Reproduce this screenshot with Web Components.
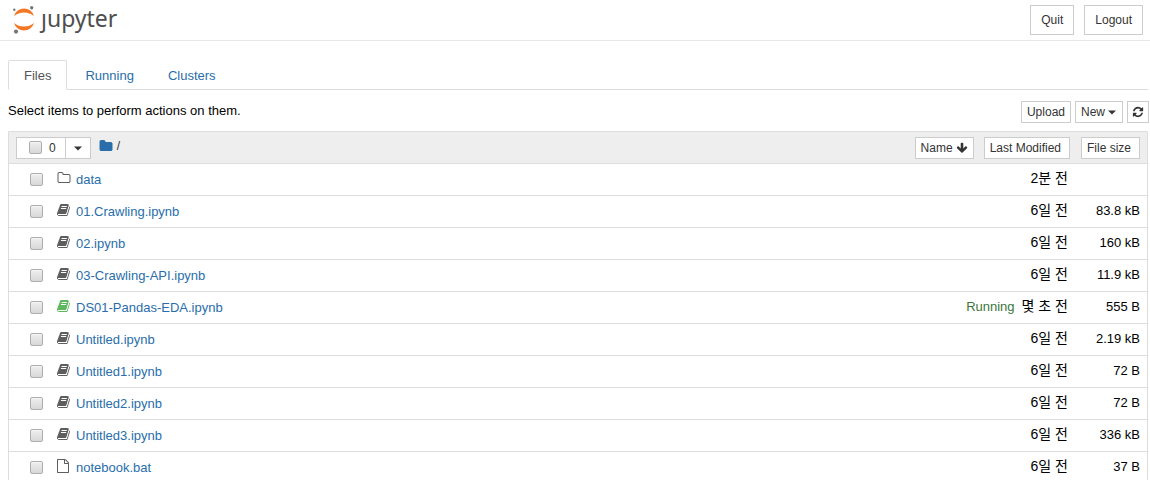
<!DOCTYPE html>
<html lang="ko">
<head>
<meta charset="utf-8">
<title>Home</title>
<style>
html{overflow:hidden}
body{margin:0;background:#fff;color:#000;font:13px/18px "Liberation Sans","Noto Sans CJK KR",sans-serif}
</style>
</head>
<body>
<nb-app></nb-app>
<script>
const ICONS = {
  book:'M1639 478q40 57 18 129l-275 906q-19 64-76.5 107.5t-122.500 43.5h-923q-77 0-148.500-53.500t-99.500-131.500q-24-67-2-127 0-4 3-27t4-37q1-8-3-21.500t-3-19.500q2-11 8-21t16.500-23.500 16.500-23.500q23-38 45-91.500t30-91.500q3-10 .5-30t-.5-28q3-11 17-28t17-23q21-36 42-92t25-90q1-9-2.500-32t.5-28q4-13 22-30.500t22-22.500q19-26 42.500-84.500t27.500-96.500q1-8-3-25.500t-2-26.500q2-8 9-18t18-23 17-21q8-12 16.500-30.500t15-35 16-36 19.500-32 26.500-23.500 36-11.500 47.500 5.500l-1 3q38-9 51-9h761q74 0 114 56t18 130l-274 906q-36 119-71.500 153.500t-128.500 34.500h-869q-27 0-38 15-11 16-1 43 24 70 144 70h923q29 0 56-15.500t35-41.500l300-987q7-22 5-57 38 15 59 43zm-1064 2q-4 13 2 22.500t20 9.500h608q13 0 25.500-9.500t16.500-22.500l21-64q4-13-2-22.500t-20-9.500h-608q-13 0-25.500 9.500t-16.500 22.500zm-83 256q-4 13 2 22.500t20 9.500h608q13 0 25.500-9.500t16.500-22.500l21-64q4-13-2-22.500t-20-9.500h-608q-13 0-25.500 9.500t-16.500 22.500z',
  refresh:'M1639 1056q0 5-1 7-64 268-268 434.500t-478 166.500q-146 0-282.500-55t-243.500-157l-129 129q-19 19-45 19t-45-19-19-45v-448q0-26 19-45t45-19h448q26 0 45 19t19 45-19 45l-137 137q71 66 161 102t187 36q134 0 250-65t186-179q11-17 53-117 8-23 30-23h192q13 0 22.500 9.500t9.500 22.500zm25-800v448q0 26-19 45t-45 19h-448q-26 0-45-19t-19-45 19-45l138-138q-148-137-349-137-134 0-250 65t-186 179q-11 17-53 117-8 23-30 23h-199q-13 0-22.500-9.500t-9.500-22.500v-7q65-268 270-434.500t480-166.500q146 0 284 55.500t245 156.500l130-129q19-19 45-19t45 19 19 45z',
  folder:'M1728 608v704q0 92-66 158t-158 66h-1216q-92 0-158-66t-66-158v-960q0-92 66-158t158-66h320q92 0 158 66t66 158v32h672q92 0 158 66t66 158z',
  'folder-o':'M1600 1312v-704q0-40-28-68t-68-28h-704q-40 0-68-28t-28-68v-64q0-40-28-68t-68-28h-320q-40 0-68 28t-28 68v960q0 40 28 68t68 28h1216q40 0 68-28t28-68zm128-704v704q0 92-66 158t-158 66h-1216q-92 0-158-66t-66-158v-960q0-92 66-158t158-66h320q92 0 158 66t66 158v32h672q92 0 158 66t66 158z',
  'arrow-down':'M1675 832q0 53-37 90l-651 652q-39 37-91 37-53 0-90-37l-651-652q-38-36-38-90 0-53 38-91l74-75q39-37 91-37 53 0 90 37l294 294v-704q0-52 38-90t90-38h128q52 0 90 38t38 90v704l294-294q37-37 90-37 52 0 91 37l75 75q37 39 37 91z',
  'file-o':'M1596 380q28 28 48 76t20 88v1152q0 40-28 68t-68 28h-1344q-40 0-68-28t-28-68v-1600q0-40 28-68t68-28h896q40 0 88 20t76 48zm-444-244v376h376q-10-29-22-41l-313-313q-12-12-41-22zm384 1528v-1024h-416q-40 0-68-28t-28-68v-416h-768v1536h1280z',
  caret:'M384 704h1024l-512 512z'
};

function define(name, render) {
  customElements.define(name, class extends HTMLElement {
    connectedCallback() {
      if (this.shadowRoot) return;
      const t = document.createElement('template');
      t.innerHTML = render(this);
      this.attachShadow({mode:'open'}).append(t.content.cloneNode(true));
    }
  });
}

define('nb-icon', el => `
<style>
:host{display:inline-block;width:var(--icon-size,14px);height:var(--icon-size,14px);flex:none}
svg{display:block;width:100%;height:100%;fill:currentColor}
</style>
<svg viewBox="${el.getAttribute('name') === 'file-o' ? '128 0 1792 1792' : '0 0 1792 1792'}" aria-hidden="true"><path d="${ICONS[el.getAttribute('name')]}"/></svg>`);

define('nb-button', el => `
<style>
:host{display:inline-flex;--icon-size:12px}
button{display:flex;align-items:center;gap:3px;box-sizing:border-box;height:22px;margin:0;padding:0 5px;border:1px solid #ccc;background:#fff;color:#333;font:12px/18px "Liberation Sans",sans-serif;white-space:nowrap}
:host([large]) button{height:30px;padding:0 10px}
:host([icon]) button{padding:0 4px}
:host([caret]) button{gap:0;padding-right:3px;--icon-size:14px}
:host([sort]) button{padding-right:8px}
</style>
<button type="button" ${el.title ? `aria-label="${el.title}"` : ''}><slot></slot></button>`);

define('nb-menu-button', el => `
<style>
:host{display:inline-flex;--icon-size:14px}
button{display:flex;align-items:center;box-sizing:border-box;height:22px;margin:0;padding:0 3px 0 5px;border:1px solid #ccc;background:#fff;color:#333;font:12px/18px "Liberation Sans",sans-serif;white-space:nowrap}
</style>
<button type="button" aria-haspopup="menu"><slot></slot><nb-icon name="caret"></nb-icon></button>`);

define('nb-checkbox', el => `
<style>
:host{display:inline-flex;flex:none}
input{appearance:none;box-sizing:border-box;width:13px;height:13px;margin:0;border:1px solid #adadad;border-radius:2px;background:linear-gradient(#eee,#d8d8d8);box-shadow:inset 0 1px #f6f6f6}
</style>
<input type="checkbox" aria-label="${el.getAttribute('label')}">`);

define('nb-logo', () => `
<style>
:host{display:flex}
a{display:flex;align-items:center;gap:5px;color:#4e4e4e;text-decoration:none;font:23px/28px "Noto Sans","Open Sans",sans-serif}
svg{display:block;flex:none}
span{padding-bottom:4px}
</style>
<a href="#" aria-label="jupyter">
<svg width="24" height="32" viewBox="12 4 24 32" aria-hidden="true">
<path fill="#f37726" d="M14 16A10.4 10.4 0 0 1 34 16A16 16 0 0 0 14 16ZM14 23A10.4 10.4 0 0 0 34 23A16 16 0 0 1 14 23Z"/>
<g fill="#767677"><circle cx="14.3" cy="9.8" r="1.2"/><circle cx="31.7" cy="7.7" r="1.7"/><circle cx="16" cy="31.600" r="2.1"/></g>
</svg><span>ȷupyter</span></a>`);

define('nb-header', () => `
<style>
:host{display:flex;align-items:center;justify-content:space-between;height:40px;padding:0 7px 0 12px;border-bottom:1px solid #e7e7e7}
div{display:flex;gap:10px}
</style>
<nb-logo></nb-logo>
<div><nb-button large>Quit</nb-button><nb-button large>Logout</nb-button></div>`);

define('nb-tabs', () => `
<style>
:host{display:block;border-bottom:1px solid #ddd}
nav{display:flex;gap:2px;margin-bottom:-1px}
a{padding:6px 15px 4px;border:1px solid transparent;color:#296eaa;text-decoration:none}
a[aria-current]{border-color:#ddd #ddd #fff;border-radius:2px 2px 0 0;background:#fff;color:#555}
</style>
<nav><a href="#files" aria-current="page">Files</a><a href="#running">Running</a><a href="#clusters">Clusters</a></nav>`);

define('nb-toolbar', () => `
<style>
:host{display:flex;align-items:center;justify-content:space-between}
div{display:flex;gap:4px}
p{margin:0 0 2px}
</style>
<p>Select items to perform actions on them.</p>
<div><nb-button>Upload</nb-button><nb-menu-button>New</nb-menu-button><nb-button icon title="Refresh"><nb-icon name="refresh"></nb-icon></nb-button></div>`);

define('nb-selector', () => `
<style>
:host{display:flex;align-items:center;gap:8px;font-size:12px;color:#333}
div{display:flex;box-sizing:border-box;height:22px;border:1px solid #ccc;background:#fff}
label{display:flex;align-items:center;gap:7px;padding:0 9px 0 12px}
button{display:flex;align-items:center;justify-content:center;width:25px;margin:0;padding:0;border:0;border-left:1px solid #ccc;background:#fff;color:#333;--icon-size:14px}
nav{display:flex;align-items:center;gap:4px;padding-bottom:3px}
a{display:flex;color:#296eaa}
</style>
<div><label><nb-checkbox label="Select all"></nb-checkbox><span>0</span></label><button type="button" aria-label="Select by type"><nb-icon name="caret"></nb-icon></button></div>
<nav><a href="#" aria-label="Home folder"><nb-icon name="folder"></nb-icon></a><span>/</span></nav>`);

const FILES = [
  ['folder-o','data','2분 전',''],
  ['book','01.Crawling.ipynb','6일 전','83.8 kB'],
  ['book','02.ipynb','6일 전','160 kB'],
  ['book','03-Crawling-API.ipynb','6일 전','11.9 kB'],
  ['book','DS01-Pandas-EDA.ipynb','몇 초 전','555 B',true],
  ['book','Untitled.ipynb','6일 전','2.19 kB'],
  ['book','Untitled1.ipynb','6일 전','72 B'],
  ['book','Untitled2.ipynb','6일 전','72 B'],
  ['book','Untitled3.ipynb','6일 전','336 kB'],
  ['file-o','notebook.bat','6일 전','37 B']
];

define('nb-file-list', () => `
<style>
:host{display:block;border:1px solid #ddd;border-radius:1px}
table{width:100%;border-collapse:separate;border-spacing:0}
th,td{box-sizing:border-box;height:32px;padding:0;border-bottom:1px solid #ddd;font-weight:normal;text-align:right;vertical-align:middle;white-space:nowrap}
th{background:#eee}
th>div{display:flex;justify-content:flex-end;gap:10px}
th:first-child{padding-left:7px}
th:last-child,td:last-child{width:77px;padding-right:7px}
td:nth-child(2){padding-right:2px}
td:nth-child(n+2){padding-bottom:2px}
.item{display:flex;align-items:center;padding-left:21px}
.item nb-icon{margin:0 5px 3px 14px;color:#5e5e5e}
.item.running nb-icon{color:#5cb85c}
.item a{color:#296eaa;text-decoration:none}
.status{margin-right:7px;color:#3c763d}
time{font-size:14px}
</style>
<table>
<thead><tr><th><nb-selector></nb-selector></th>
<th><div><nb-button>Name<nb-icon name="arrow-down"></nb-icon></nb-button><nb-button sort>Last Modified</nb-button></div></th>
<th><div><nb-button sort>File size</nb-button></div></th></tr></thead>
<tbody>${FILES.map(([icon,name,time,size,running]) => `<tr>
<td><div class="item${running ? ' running' : ''}"><nb-checkbox label="${name}"></nb-checkbox><nb-icon name="${icon}"></nb-icon><a href="#${name}">${name}</a></div></td>
<td>${running ? '<span class="status">Running</span>' : ''}<time>${time}</time></td><td>${size}</td></tr>`).join('')}</tbody>
</table>`);

define('nb-app', () => `
<style>
:host{display:block}
main{padding:19px 2px 0 8px}
nb-toolbar{padding:11px 0 8px;margin-right:-1px}
</style>
<nb-header></nb-header>
<main><nb-tabs></nb-tabs><nb-toolbar></nb-toolbar><nb-file-list></nb-file-list></main>`);
</script>
</body>
</html>
